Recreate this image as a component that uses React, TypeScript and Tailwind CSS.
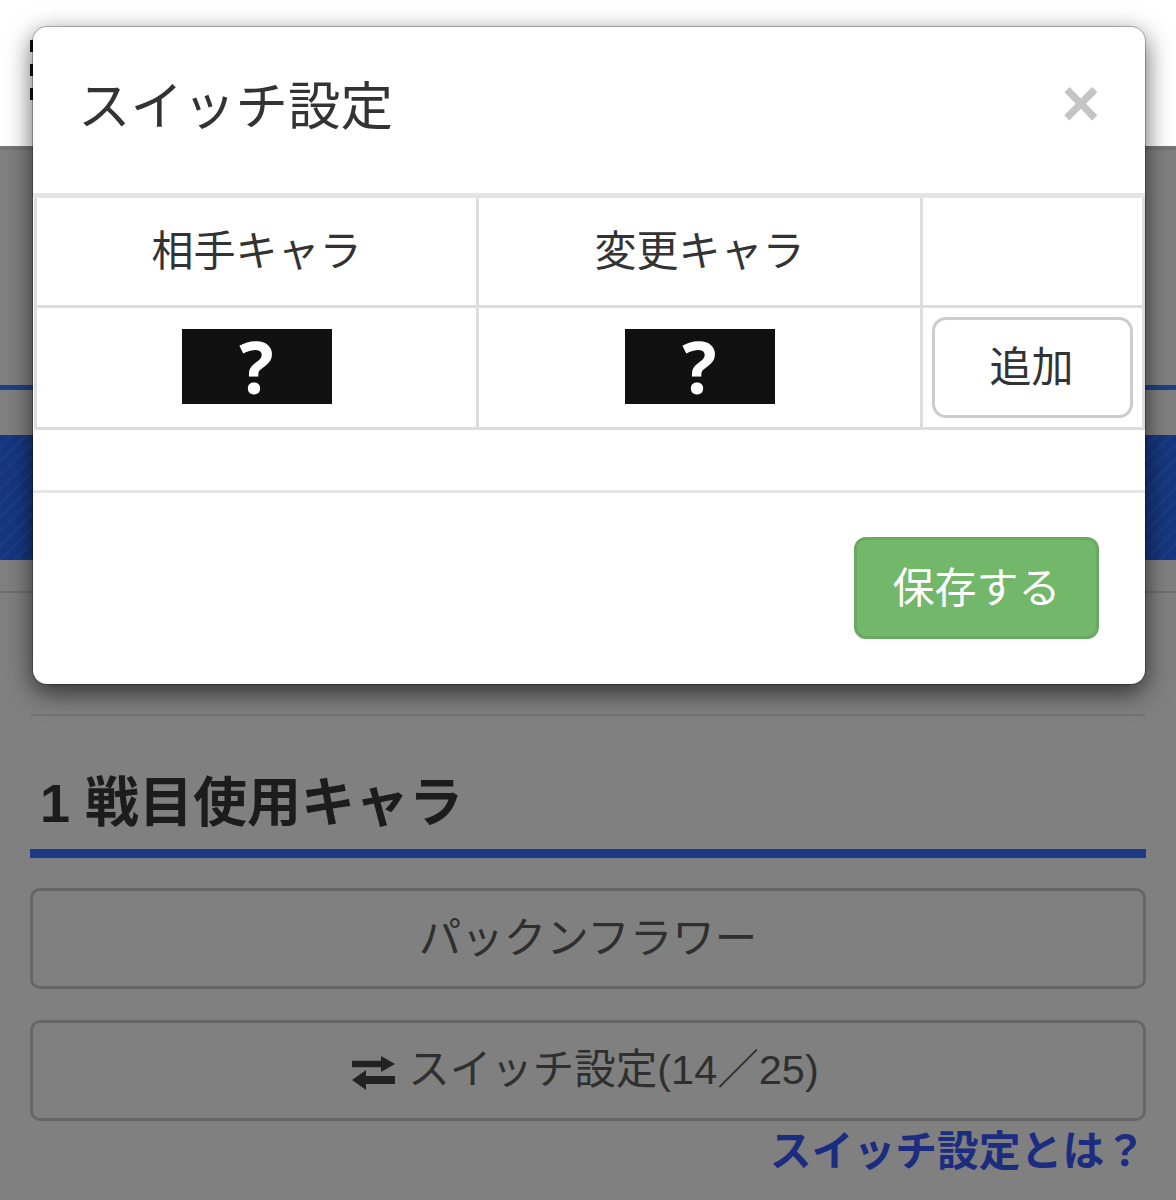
const jp = "font-['Liberation_Sans','Noto_Sans_CJK_JP',sans-serif]";

function SwitchIcon() {
  return (
    <svg width="44" height="34" viewBox="0 0 44 34" className="mr-3 shrink-0 mt-1">
      <path d="M0 6h29V0l14 10-14 10v-6H0z" fill="#222" transform="scale(1 0.8)" />
      <path d="M43 20H14v-6L0 24l14 10v-6h29z" fill="#222" />
    </svg>
  );
}

function Unknown() {
  return (
    <div className="mx-auto mb-[2px] flex h-[75px] w-[150px] items-center justify-center bg-[#111111] font-['Open_Sans',sans-serif] text-[72px] font-bold leading-none text-white">
      ?
    </div>
  );
}

function Modal() {
  return (
    <div className="absolute left-[33px] top-[27px] flex h-[657px] w-[1112px] flex-col rounded-[14px] bg-white shadow-[0_0_0_1px_rgba(0,0,0,0.25),0_8px_26px_rgba(0,0,0,0.65)]">
      <div className="flex h-[171px] items-start justify-between border-b-[5px] border-[#e5e5e5] pl-[45px] pr-[45px]">
        <h2 className="mt-[47px] text-[52.5px] leading-[66px] text-[#333333]">スイッチ設定</h2>
        <span className="mt-[43px] text-[66px] font-bold leading-[66px] text-[#c4c4c4]">×</span>
      </div>
      <div className="h-[292px] pl-[1px]">
        <table className="w-[1108px] table-fixed border-collapse text-center text-[42px] text-[#333333]">
          <colgroup>
            <col className="w-[442px]" />
            <col className="w-[444px]" />
            <col className="w-[222px]" />
          </colgroup>
          <tbody>
            <tr className="h-[108px]">
              <td className="border-[3px] border-t-0 border-[#dddddd]">相手キャラ</td>
              <td className="border-[3px] border-t-0 border-[#dddddd]">変更キャラ</td>
              <td className="border-[3px] border-t-0 border-[#dddddd]"></td>
            </tr>
            <tr className="h-[122px]">
              <td className="border-[3px] border-[#dddddd]"><Unknown /></td>
              <td className="border-[3px] border-[#dddddd]"><Unknown /></td>
              <td className="border-[3px] border-[#dddddd]">
                <button className="mx-auto flex h-[101px] w-[201px] items-center justify-center rounded-[14px] border-[3px] border-[#cccccc] bg-white pr-[2px] text-[#333333]">
                  追加
                </button>
              </td>
            </tr>
          </tbody>
        </table>
      </div>
      <div className="flex flex-1 items-start justify-end border-t-[3px] border-[#e5e5e5] pr-[46px] pt-[44px]">
        <button className="flex h-[102px] w-[245px] items-center justify-center rounded-[12px] border-[3px] border-[#69aa63] bg-[#72b76a] text-[42px] text-white">
          保存する
        </button>
      </div>
    </div>
  );
}

export default function App() {
  return (
    <div className={`relative h-[1200px] w-[1176px] overflow-hidden bg-[#808080] ${jp}`}>
      <div className="relative h-[148px] border-b-2 border-[#777777] bg-white shadow-[0_1px_2px_rgba(0,0,0,0.2)]">
        <div className="absolute left-[30px] top-[40px] flex flex-col gap-[12px]">
          <span className="h-[12px] w-[3px] bg-[#111111]" />
          <span className="h-[12px] w-[3px] bg-[#111111]" />
          <span className="h-[12px] w-[3px] bg-[#111111]" />
        </div>
      </div>
      <div className="mt-[237px] h-[5px] bg-[#1d4288]" />
      <div className="mt-[45px] h-[125px] bg-[#17367f] bg-[repeating-linear-gradient(135deg,#17367f_0px,#17367f_7px,#1a3c86_7px,#1a3c86_10px)]" />
      <div className="mt-[31px] h-[2px] bg-[#707070]" />
      <div className="px-[30px]">
        <div className="mt-[121px] h-[2px] bg-[#757575]" />
        <h3 className="mt-[52px] pl-[10px] text-[54px] font-bold leading-[70px] text-[#1c1c1c]">1 戦目使用キャラ</h3>
        <div className="mt-[11px] h-[9px] bg-[#1c3a86]" />
        <button className="mt-[30px] flex h-[101px] w-full items-center justify-center rounded-[10px] border-[3px] border-[#666666] text-[42.5px] text-[#2f2f2f]">
          パックンフラワー
        </button>
        <button className="mt-[31px] flex h-[101px] w-full items-center justify-center rounded-[10px] border-[3px] border-[#666666] pr-[5px] text-[41.5px] text-[#2f2f2f]">
          <SwitchIcon />
          スイッチ設定(14／25)
        </button>
        <div className="mt-[3px] text-right text-[41.8px] font-bold leading-[56px] text-[#1c2d80]">スイッチ設定とは？</div>
      </div>
      <Modal />
    </div>
  );
}
